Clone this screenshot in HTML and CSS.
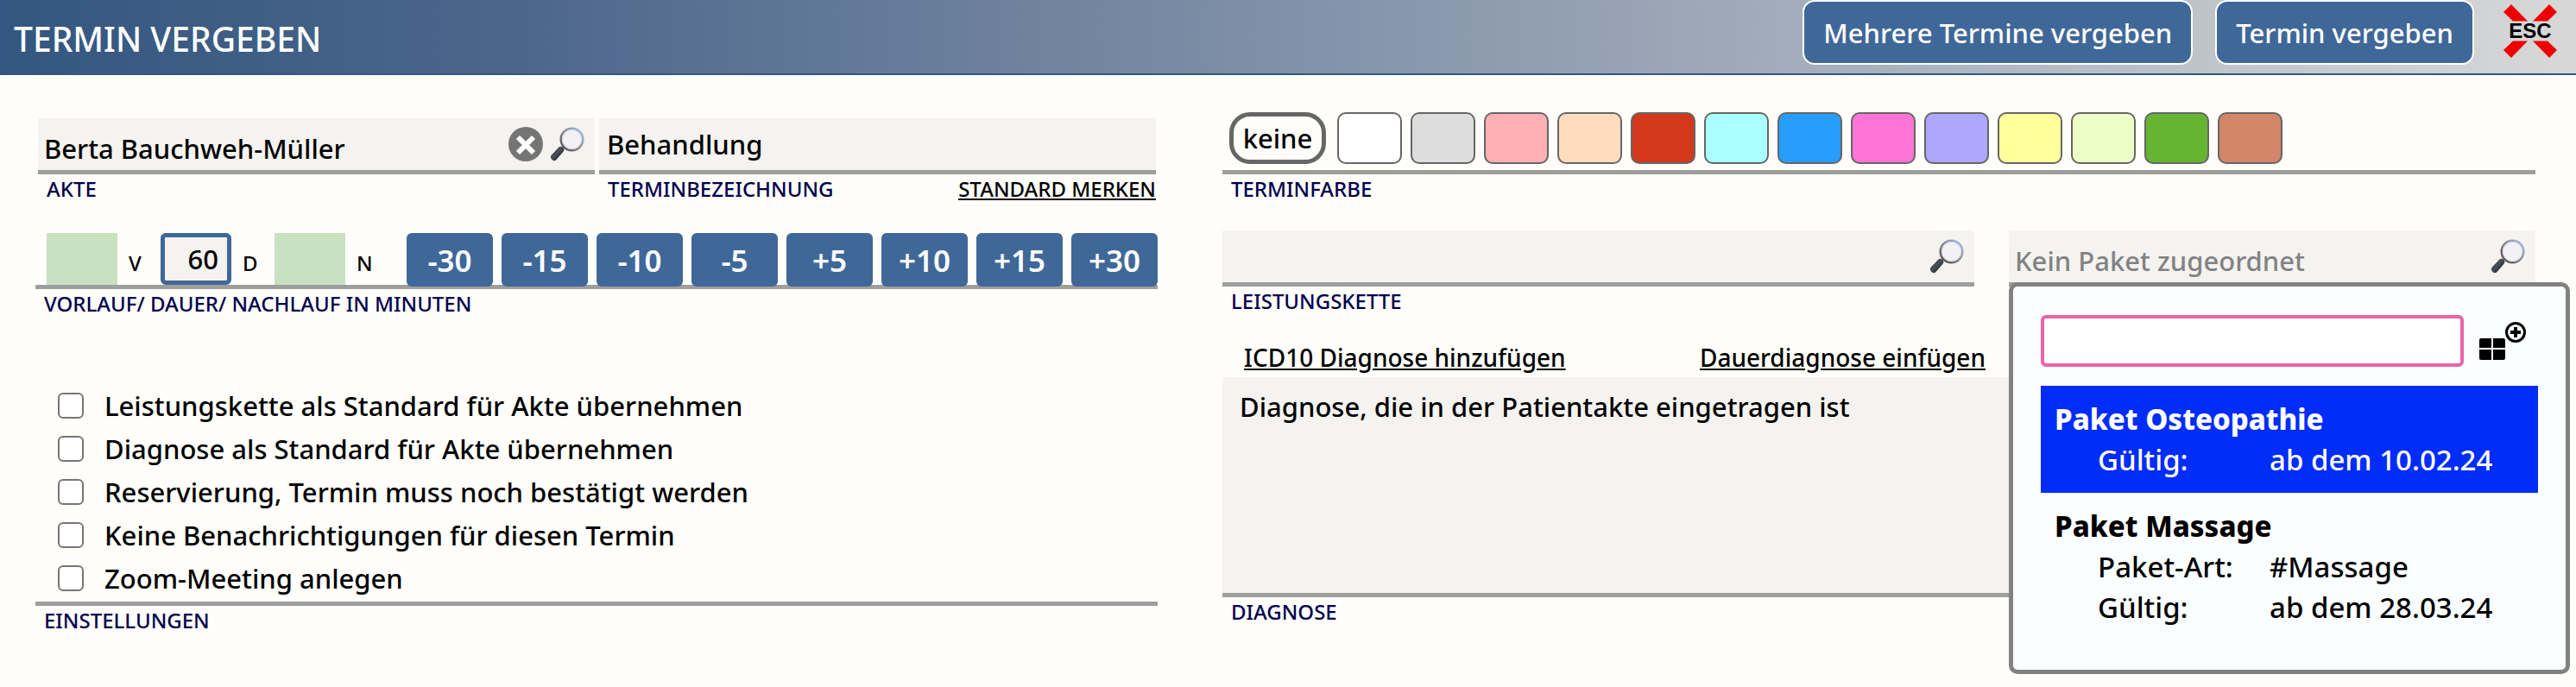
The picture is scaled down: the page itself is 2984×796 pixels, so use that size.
FILE: index.html
```html
<!DOCTYPE html>
<html lang="de">

<head>
    <meta charset="UTF-8">
    <meta name="viewport" content="width=device-width, initial-scale=1.0">
    <title>Termin vergeben</title>
    <link rel="stylesheet" href="styles.css">
</head>

<body>

    <svg class="defs" xmlns="http://www.w3.org/2000/svg">
        <defs>
            <linearGradient id="rim" x1="0" y1="1" x2="1" y2="0">
                <stop offset="0" stop-color="#4a4444" />
                <stop offset="0.5" stop-color="#8b8b90" />
                <stop offset="1" stop-color="#9cc4f0" />
            </linearGradient>
            <linearGradient id="grip" x1="0" y1="0" x2="1" y2="1">
                <stop offset="0" stop-color="#0a0c0e" />
                <stop offset="0.45" stop-color="#4a525a" />
                <stop offset="1" stop-color="#050607" />
            </linearGradient>
            <symbol id="lupe" viewBox="0 0 40 40">
                <path d="M14 25L18 21" stroke="#8a8a8a" stroke-width="3" />
                <path d="M10.500 23.500Q12.500 22 14.500 23.500L16 25Q17.200 26.800 15.500 28.800L7 38.500Q5 40 3 38.500L1.500 37Q0 35 1.500 33Z" fill="url(#grip)" />
                <circle cx="25.500" cy="14.500" r="12.800" fill="#f2f2f5" stroke="url(#rim)" stroke-width="2.400" />
                <circle cx="25.500" cy="14.500" r="11" fill="none" stroke="#d9d9de" stroke-width="1" />
            </symbol>
        </defs>
    </svg>

    <header>
        <h1>TERMIN VERGEBEN</h1>
        <div class="actions">
            <button class="action" type="button">Mehrere Termine vergeben</button>
            <button class="action" type="button">Termin vergeben</button>
            <button class="esc" type="button" aria-label="Schließen">
                <svg viewBox="0 0 62 62">
                    <path d="M9 0L28 19.500H11L0 9ZM53 0L62 9L51 19.500H34ZM11 42.500H28L9 62L0 53ZM34 42.500H51L62 53L53 62Z" fill="#ee0000" />
                    <text x="31" y="39" text-anchor="middle">ESC</text>
                </svg>
            </button>
        </div>
    </header>

    <main>
        <section class="left">
            <div class="pair">
                <div class="field">
                    <div class="box">
                        <input class="low" id="akte" type="text" value="Berta Bauchweh-Müller">
                        <button class="icon" type="button" aria-label="Akte leeren">
                            <svg viewBox="0 0 40 40">
                                <circle cx="20" cy="20" r="20" fill="#757575" />
                                <path d="M11 12L29 30M29 12L11 30" stroke="#fff" stroke-width="6" />
                            </svg>
                        </button>
                        <button class="icon" type="button" aria-label="Akte suchen"><svg><use href="#lupe" /></svg></button>
                    </div>
                    <div class="caption"><label for="akte">AKTE</label></div>
                </div>
                <div class="field">
                    <div class="box">
                        <input id="bezeichnung" type="text" value="Behandlung">
                    </div>
                    <div class="caption"><label for="bezeichnung">TERMINBEZEICHNUNG</label><a href="#">STANDARD MERKEN</a></div>
                </div>
            </div>

            <div class="field minutes">
                <div class="times">
                    <input class="puffer" id="vorlauf" type="text"><label for="vorlauf">V</label>
                    <input class="dauer" id="dauer" type="text" value="60"><label for="dauer">D</label>
                    <input class="puffer" id="nachlauf" type="text"><label for="nachlauf">N</label>
                    <div class="steps">
                        <button type="button">-30</button>
                        <button type="button">-15</button>
                        <button type="button">-10</button>
                        <button type="button">-5</button>
                        <button type="button">+5</button>
                        <button type="button">+10</button>
                        <button type="button">+15</button>
                        <button type="button">+30</button>
                    </div>
                </div>
                <div class="caption"><span>VORLAUF/ DAUER/ NACHLAUF IN MINUTEN</span></div>
            </div>

            <div class="field settings">
                <div class="checks">
                    <label><input type="checkbox">Leistungskette als Standard für Akte übernehmen</label>
                    <label><input type="checkbox">Diagnose als Standard für Akte übernehmen</label>
                    <label><input type="checkbox">Reservierung, Termin muss noch bestätigt werden</label>
                    <label><input type="checkbox">Keine Benachrichtigungen für diesen Termin</label>
                    <label><input type="checkbox">Zoom-Meeting anlegen</label>
                </div>
                <div class="caption"><span>EINSTELLUNGEN</span></div>
            </div>
        </section>

        <section class="right">
            <div class="field">
                <div class="colors">
                    <button class="none" type="button">keine</button>
                    <button class="swatch white" type="button" aria-label="Weiß"></button>
                    <button class="swatch gray" type="button" aria-label="Grau"></button>
                    <button class="swatch rose" type="button" aria-label="Rosa"></button>
                    <button class="swatch peach" type="button" aria-label="Pfirsich"></button>
                    <button class="swatch red" type="button" aria-label="Rot"></button>
                    <button class="swatch cyan" type="button" aria-label="Türkis"></button>
                    <button class="swatch blue" type="button" aria-label="Blau"></button>
                    <button class="swatch pink" type="button" aria-label="Pink"></button>
                    <button class="swatch violet" type="button" aria-label="Violett"></button>
                    <button class="swatch yellow" type="button" aria-label="Gelb"></button>
                    <button class="swatch lime" type="button" aria-label="Hellgrün"></button>
                    <button class="swatch green" type="button" aria-label="Grün"></button>
                    <button class="swatch brown" type="button" aria-label="Braun"></button>
                </div>
                <div class="caption"><span>TERMINFARBE</span></div>
            </div>

            <div class="pakete">
                <div class="field">
                    <div class="box">
                        <input id="kette" type="text">
                        <button class="icon" type="button" aria-label="Leistungskette suchen"><svg><use href="#lupe" /></svg></button>
                    </div>
                    <div class="caption"><label for="kette">LEISTUNGSKETTE</label></div>
                </div>
                <div class="field paket">
                    <div class="box">
                        <input class="low" type="text" placeholder="Kein Paket zugeordnet" aria-label="Paket">
                        <button class="icon" type="button" aria-label="Paket suchen"><svg><use href="#lupe" /></svg></button>
                    </div>
                    <div class="popup">
                        <div class="search">
                            <input type="text" aria-label="Paket suchen">
                            <button class="add" type="button" aria-label="Neues Paket">
                                <svg viewBox="0 0 54 46">
                                    <path d="M2 20H14V31H0V22Q0 20 2 20ZM16 20H28Q30 20 30 22V31H16ZM0 33H14V45H2Q0 45 0 43ZM16 33H30V43Q30 45 28 45H16Z" />
                                    <circle cx="42" cy="13" r="10.500" fill="none" stroke="#000" stroke-width="3" />
                                    <path d="M42 7V19M36 13H48" stroke="#000" stroke-width="4" />
                                </svg>
                            </button>
                        </div>
                        <div class="entry active">
                            <h2>Paket Osteopathie</h2>
                            <dl>
                                <dt>Gültig:</dt>
                                <dd>ab dem 10.02.24</dd>
                            </dl>
                        </div>
                        <div class="entry">
                            <h2>Paket Massage</h2>
                            <dl>
                                <dt>Paket-Art:</dt>
                                <dd>#Massage</dd>
                                <dt>Gültig:</dt>
                                <dd>ab dem 28.03.24</dd>
                            </dl>
                        </div>
                    </div>
                </div>
            </div>

            <div class="field">
                <div class="links">
                    <a href="#">ICD10 Diagnose hinzufügen</a>
                    <a href="#">Dauerdiagnose einfügen</a>
                </div>
                <textarea id="diagnose">Diagnose, die in der Patientakte eingetragen ist</textarea>
                <div class="caption"><label for="diagnose">DIAGNOSE</label></div>
            </div>
        </section>
    </main>

</body>

</html>
```
FILE: styles.css
```css
* {
    padding: 0;
    margin: 0;
    box-sizing: border-box;
}

body {
    min-height: 100vh;
    background-color: #fffefa;
    color: #000000;
    font-family: "Noto Sans", sans-serif;
    font-size: 31px;
    font-weight: 500;
}

input,
button,
textarea {
    font: inherit;
    color: inherit;
    border: none;
    background: none;
    outline: none;
}

button {
    cursor: pointer;
}

a {
    color: #000000;
}

.defs {
    position: absolute;
    width: 0;
    height: 0;
}

header {
    display: flex;
    justify-content: space-between;
    height: 87px;
    padding-left: 16px;
    padding-right: 22px;
    border-bottom: 2px solid #335780;
    background: linear-gradient(to right, #335780, #4c668b 20%, #d8d8d8);
}

h1 {
    color: #ffffff;
    font-size: 39px;
    font-weight: 500;
    line-height: 90px;
}

.actions {
    display: flex;
    align-items: flex-start;
    gap: 26px;
}

.action {
    height: 75px;
    padding: 0 22px;
    color: #ffffff;
    background-color: #3f6899;
    border: 2px solid #ffffff;
    border-radius: 14px;
}

.esc {
    width: 62px;
    height: 62px;
    margin-top: 5px;
    margin-left: 8px;
}

.esc svg {
    display: block;
    width: 62px;
    height: 62px;
}

.esc text {
    font-family: "Liberation Sans", Arial, sans-serif;
    font-size: 24px;
    font-weight: bold;
}

main {
    display: grid;
    grid-template-columns: 1300fr 1521fr;
    gap: 75px;
    padding: 43px 47px 0 41px;
}

.pair {
    display: grid;
    grid-template-columns: 1fr 1fr;
    gap: 5px;
    padding-top: 7px;
    padding-left: 3px;
    padding-right: 2px;
}

.box {
    display: flex;
    align-items: center;
    height: 65px;
    padding-right: 12px;
    background-color: #f4f3f0;
    border-bottom: 5px solid #9d9f9e;
}

.box input {
    flex: 1;
    min-width: 0;
    height: 60px;
    padding-left: 9px;
}

.box .low {
    padding-top: 10px;
    padding-left: 7px;
}

.icon {
    width: 40px;
    height: 40px;
    margin-left: 8px;
}

.icon svg {
    display: block;
    width: 40px;
    height: 40px;
}

input::placeholder {
    color: #828282;
    opacity: 1;
}

.caption {
    display: flex;
    justify-content: space-between;
    padding-left: 10px;
    color: #00004d;
    font-size: 24px;
    line-height: 34px;
}

.times {
    display: flex;
    align-items: flex-end;
    height: 65px;
    padding-left: 13px;
    border-bottom: 5px solid #9d9f9e;
}

.times label {
    width: 50px;
    padding-left: 13px;
    font-size: 24px;
    line-height: 50px;
}

.puffer,
.dauer {
    width: 82px;
    height: 60px;
}

.puffer {
    background-color: #c8e1c1;
}

.dauer {
    padding-right: 10px;
    text-align: right;
    background-color: #f4f3f0;
    border: 5px solid #3f6899;
    border-radius: 6px;
}

.steps {
    display: flex;
    flex: 1;
    gap: 10px;
    margin-left: 21px;
    margin-bottom: -2px;
}

.steps button {
    flex: 1;
    height: 62px;
    color: #ffffff;
    font-size: 35px;
    font-weight: 600;
    background-color: #3f6899;
    border-radius: 6px;
}

.minutes {
    margin-top: 34px;
}

.settings {
    margin-top: 76px;
}

.checks {
    display: flex;
    flex-direction: column;
    padding-left: 26px;
    padding-bottom: 2px;
    border-bottom: 5px solid #9d9f9e;
}

.checks label {
    display: flex;
    align-items: center;
    gap: 24px;
    line-height: 50px;
}

.checks input {
    appearance: none;
    width: 30px;
    height: 30px;
    background-color: #ffffff;
    border: 2px solid #767676;
    border-radius: 6px;
}

.colors {
    display: flex;
    gap: 10px;
    height: 72px;
    padding-left: 8px;
    border-bottom: 5px solid #9d9f9e;
}

.none {
    width: 112px;
    height: 60px;
    margin-right: 3px;
    border: 5px solid #666666;
    border-radius: 24px;
}

.swatch {
    width: 75px;
    height: 60px;
    border: 2px solid #666666;
    border-radius: 10px;
}

.white { background-color: #ffffff; }
.gray { background-color: #dddddd; }
.rose { background-color: #ffb0b5; }
.peach { background-color: #ffdcbd; }
.red { background-color: #d2381c; }
.cyan { background-color: #aaffff; }
.blue { background-color: #279dff; }
.pink { background-color: #ff74d6; }
.violet { background-color: #ada7ff; }
.yellow { background-color: #ffff9b; }
.lime { background-color: #ecffc5; }
.green { background-color: #65b533; }
.brown { background-color: #d3866a; }

.pakete {
    display: grid;
    grid-template-columns: 871fr 610fr;
    gap: 40px;
    margin-top: 31px;
}

.paket {
    position: relative;
}

.popup {
    position: absolute;
    top: 60px;
    left: 0;
    right: -40px;
    z-index: 1;
    padding: 33px 32px 34px;
    background-color: #fbfeff;
    border: 5px solid #828282;
    border-radius: 10px;
}

.search {
    display: flex;
    align-items: center;
    gap: 18px;
    margin-bottom: 22px;
}

.search input {
    flex: 1;
    min-width: 0;
    height: 60px;
    padding: 0 10px;
    background-color: #ffffff;
    border: 4px solid #e964a8;
    border-radius: 6px;
}

.add {
    width: 54px;
    height: 46px;
    margin-right: 14px;
}

.add svg {
    display: block;
    width: 54px;
    height: 46px;
}

.entry {
    padding: 15px 16px;
    font-size: 33px;
    line-height: 47px;
}

.active {
    color: #ffffff;
    background-color: #002cf8;
}

h2 {
    font-size: 33px;
    font-weight: 800;
}

dl {
    display: grid;
    grid-template-columns: 199px 1fr;
    padding-left: 50px;
}

.links {
    display: flex;
    justify-content: space-between;
    width: 900px;
    padding-left: 25px;
    padding-right: 16px;
    margin-top: 26px;
    font-size: 28px;
    line-height: 45px;
}

textarea {
    display: block;
    width: 100%;
    height: 255px;
    padding: 12px 20px;
    line-height: 44px;
    background-color: #f4f3f0;
    border-bottom: 5px solid #9d9f9e;
    resize: none;
}
```
